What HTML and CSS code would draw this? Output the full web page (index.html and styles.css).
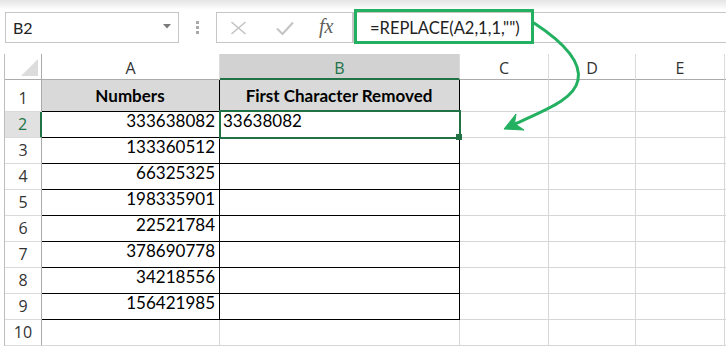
FILE: index.html
```html
<!DOCTYPE html>
<html>
<head>
<meta charset="utf-8">
<link rel="stylesheet" href="styles.css">
</head>
<body>
<div class="toolbar">
  <div class="namebox"><span>B2</span><svg class="dd" width="8" height="5" viewBox="0 0 8 5"><path d="M0 0H8L4 4.5Z" fill="#7a7a7a"/></svg></div>
  <div class="grip"><i></i><i></i><i></i></div>
  <div class="buttons">
    <svg class="ic-x" width="17" height="14" viewBox="0 0 17 14"><path d="M1.5 1L15.5 13M15.5 1L1.5 13" stroke="#c3c3c3" stroke-width="1.6" fill="none"/></svg>
    <svg class="ic-ok" width="18" height="15" viewBox="0 0 18 15"><path d="M1 7.5L6.5 13L17 1.5" stroke="#c3c3c3" stroke-width="2" fill="none"/></svg>
    <span class="fx">fx</span>
  </div>
  <div class="formula"><span>=REPLACE(A2,1,1,"")</span></div>
  <div class="highlight"></div>
</div>
<div class="sheet">
  <div class="c ch corner"><svg width="17" height="17" viewBox="0 0 17 17"><path d="M17 0V17H0Z" fill="#dcdcdc"/></svg></div>
  <div class="c ch">A</div>
  <div class="c ch sel">B</div>
  <div class="c ch">C</div>
  <div class="c ch">D</div>
  <div class="c ch">E</div>
  <div class="c ch last"></div>

  <div class="c rh">1</div>
  <div class="c d hd tb">Numbers</div>
  <div class="c d hd tb">First Character Removed</div>
  <div class="c"></div><div class="c"></div><div class="c"></div><div class="c last"></div>

  <div class="c rh sel">2</div>
  <div class="c d num tb">333638082</div>
  <div class="c d tb active">33638082</div>
  <div class="c"></div><div class="c"></div><div class="c"></div><div class="c last"></div>

  <div class="c rh">3</div>
  <div class="c d num tb">133360512</div>
  <div class="c d tb"></div>
  <div class="c"></div><div class="c"></div><div class="c"></div><div class="c last"></div>

  <div class="c rh">4</div>
  <div class="c d num tb">66325325</div>
  <div class="c d tb"></div>
  <div class="c"></div><div class="c"></div><div class="c"></div><div class="c last"></div>

  <div class="c rh">5</div>
  <div class="c d num tb">198335901</div>
  <div class="c d tb"></div>
  <div class="c"></div><div class="c"></div><div class="c"></div><div class="c last"></div>

  <div class="c rh">6</div>
  <div class="c d num tb">22521784</div>
  <div class="c d tb"></div>
  <div class="c"></div><div class="c"></div><div class="c"></div><div class="c last"></div>

  <div class="c rh">7</div>
  <div class="c d num tb">378690778</div>
  <div class="c d tb"></div>
  <div class="c"></div><div class="c"></div><div class="c"></div><div class="c last"></div>

  <div class="c rh">8</div>
  <div class="c d num tb">34218556</div>
  <div class="c d tb"></div>
  <div class="c"></div><div class="c"></div><div class="c"></div><div class="c last"></div>

  <div class="c rh">9</div>
  <div class="c d num tb">156421985</div>
  <div class="c d tb"></div>
  <div class="c"></div><div class="c"></div><div class="c"></div><div class="c last"></div>

  <div class="c rh">10</div>
  <div class="c"></div>
  <div class="c"></div>
  <div class="c"></div><div class="c"></div><div class="c"></div><div class="c last"></div>
</div>
<svg class="arrow" width="726" height="347" viewBox="0 0 726 347">
  <path d="M534 23C560 40 582 60 578 80C574 100 545 110 513 125" stroke="#24b061" stroke-width="3" fill="none" stroke-linecap="round"/>
  <path d="M504 129L516 114L514.5 123.5L524 130Z" fill="#24b061" stroke="#24b061" stroke-width="1" stroke-linejoin="round"/>
</svg>
</body>
</html>
```
FILE: styles.css
```css
* { box-sizing: border-box; }
body {
  margin: 0;
  width: 726px;
  height: 347px;
  overflow: hidden;
  position: relative;
  background: #fff;
}
.toolbar {
  position: relative;
  height: 54px;
  display: flex;
  align-items: flex-start;
  padding-top: 12px;
  background: linear-gradient(#e4e4e4, #fff) no-repeat;
  background-size: 100% 10px;
}
.namebox {
  margin-left: 5px;
  width: 174px;
  height: 31px;
  border: 1px solid #c6c6c6;
  display: flex;
  align-items: center;
  justify-content: space-between;
  padding: 0 7px 0 7px;
  font-family: Lato, sans-serif;
  font-size: 16px;
  color: #222;
  background: #fff;
}
.dd { margin-top: -2px; }
.grip {
  width: 37px;
  height: 31px;
  display: flex;
  flex-direction: column;
  align-items: center;
  justify-content: center;
  gap: 2px;
}
.grip i {
  display: block;
  width: 3px;
  height: 3px;
  background: #a8a8a8;
}
.buttons {
  width: 137px;
  height: 31px;
  border: 1px solid #c6c6c6;
  display: flex;
  align-items: center;
  padding-left: 13px;
  background: #fff;
}
.ic-x { margin-right: 29px; }
.ic-ok { margin-right: 25px; margin-top: 1px; }
.fx {
  font-family: "Liberation Serif", serif;
  font-style: italic;
  font-size: 20px;
  color: #5e5e5e;
  margin-top: -3px;
}
.formula {
  flex: 1;
  height: 31px;
  border: 1px solid #c6c6c6;
  border-right: none;
  display: flex;
  align-items: center;
  padding-left: 16px;
  font-family: Lato, sans-serif;
  font-size: 16.5px;
  color: #222;
  background: #fff;
}
.highlight {
  position: absolute;
  left: 354px;
  top: 9px;
  width: 180px;
  height: 35px;
  border: 3px solid #24b061;
}
.sheet {
  margin-left: 4px;
  border-left: 1px solid #bdbdbd;
  display: grid;
  grid-template-columns: 37px 178px 240px 89px 87px 89px 1fr;
  grid-template-rows: 26px 32px repeat(9, 26px);
}
.c {
  border-right: 1px solid #d6d6d6;
  border-bottom: 1px solid #d6d6d6;
}
.c.last { border-right: none; }
.ch {
  border-bottom-color: #ababab;
  border-right-color: #dcdcdc;
  font-family: "Open Sans", sans-serif;
  font-size: 16px;
  color: #333;
  display: flex;
  align-items: flex-end;
  justify-content: center;
  line-height: 20px;
  padding-bottom: 1px;
}
.corner {
  border-right-color: #ababab;
  justify-content: flex-end;
  padding: 0 3px 3px 0;
}
.ch.sel {
  background: #d2d2d2;
  color: #217346;
  border-bottom: 2px solid #217346;
  padding-bottom: 0;
}
.rh {
  border-right-color: #ababab;
  border-bottom-color: #dadada;
  font-family: "Open Sans", sans-serif;
  font-size: 16px;
  color: #333;
  display: flex;
  align-items: flex-end;
  justify-content: center;
  line-height: 20px;
  padding-bottom: 3px;
}
.rh.sel {
  background: #e1e1e1;
  color: #217346;
  border-right: 2px solid #217346;
}
.d {
  font-family: Lato, sans-serif;
  font-size: 17px;
  color: #000;
  display: flex;
  align-items: flex-end;
  line-height: 20px;
  padding: 0 4px 6px 3px;
  white-space: nowrap;
}
.num { justify-content: flex-end; }
.hd {
  font-weight: bold;
  justify-content: center;
  background: #d9d9d9;
  padding-bottom: 5px;
}
.tb {
  border-right-color: #000;
  border-bottom-color: #000;
}
.active { position: relative; }
.active::before {
  content: "";
  position: absolute;
  top: -2px;
  right: -2px;
  bottom: -2px;
  left: -1px;
  border: 2px solid #217346;
}
.active::after {
  content: "";
  position: absolute;
  right: -3px;
  bottom: -3px;
  width: 6px;
  height: 6px;
  background: #217346;
}
.arrow {
  position: absolute;
  left: 0;
  top: 0;
  pointer-events: none;
}
```
